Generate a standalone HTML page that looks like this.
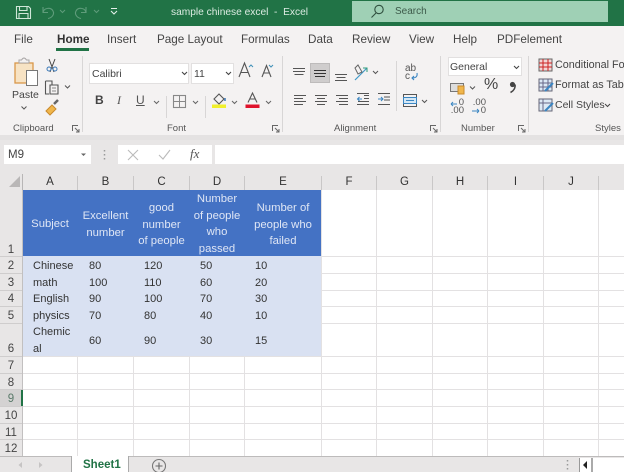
<!DOCTYPE html>
<html><head><meta charset="utf-8">
<style>
html,body{margin:0;padding:0}
body{width:624px;height:472px;overflow:hidden;position:relative;background:#fff;font-family:"Liberation Sans",sans-serif;color:#333}
div,svg{position:absolute}
.t{white-space:nowrap;line-height:14px}
.tab{top:33px;font-size:11.7px;color:#444}
.g{top:122px;font-size:9.500px;color:#555;line-height:13px;white-space:nowrap}
.c{font-size:11px;color:#333;white-space:nowrap;line-height:14px}
.w{color:#dfe6f5;font-size:11.300px;line-height:16.700px;text-align:center;white-space:nowrap}
.ch{top:175px;font-size:11.500px;color:#333;text-align:center;line-height:14px}
.rh{left:0;width:22px;text-align:center;font-size:11.500px;color:#444;line-height:14px;padding-left:0}
.vl{top:190px;height:266px;width:1px;background:#e3e1e2}
.hl{left:23px;width:601px;height:1px;background:#e3e1e2}
.hs{left:0;width:22px;height:1px;background:#cfcdcd}
.vs{top:176px;height:14px;width:1px;background:#c9c7c7}
.sep{width:1px;background:#d8d6d6}
.btn{background:#fff;border:1px solid #e2e0e0;box-sizing:border-box}
svg{overflow:visible}
</style></head><body>
<!-- title bar -->
<div style="left:0;top:0;width:624px;height:26px;background:#217346"></div>
<svg style="left:0;top:0" width="130" height="26" fill="none">
<path d="M16.500 6.500H28.500L30.500 8.500V18.500H16.500Z M19.500 6.500V10.500H27V6.500 M19 18.500V13.500H28V18.500" stroke="#cfe6d8" stroke-width="1.100"/>
<path d="M43 12.500C44 7.500 51 7 53 11C55 15 51 18 48 18.500M43 7V12.500H48" stroke="#5f9c7b" stroke-width="1.100"/>
<path d="M60 10l2.500 2.500L65 10" stroke="#5f9c7b"/>
<path d="M86 12.500C85 7.500 78 7 76 11C74 15 78 18 81 18.500M86 7V12.500H81" stroke="#5f9c7b" stroke-width="1.100"/>
<path d="M94 10l2.500 2.500L99 10" stroke="#5f9c7b"/>
<path d="M111 8.500H117M111 11l3 3 3-3" stroke="#e4f0e9" stroke-width="1.100"/>
</svg>
<div class="t" style="left:171px;top:6px;font-size:10.200px;color:#dcebe2">sample chinese excel&nbsp; -&nbsp; Excel</div>
<div style="left:352px;top:1px;width:256px;height:21px;background:#9fd0b5"></div>
<svg style="left:368px;top:3px" width="18" height="16" fill="none" stroke="#2f4f3e" stroke-width="1.100"><circle cx="11" cy="6.500" r="4.200"/><path d="M8 10L3.500 14.500"/></svg>
<div class="t" style="left:395px;top:5px;font-size:10px;color:#3d5a4a">Search</div>
<!-- ribbon -->
<div style="left:0;top:26px;width:624px;height:109px;background:#f4f2f2"></div>
<div style="left:0;top:135px;width:624px;height:5px;background:#e4e2e2"></div>
<div class="t tab" style="left:14px">File</div>
<div class="t tab" style="left:57px;font-weight:bold;color:#333;font-size:11.700px">Home</div>
<div style="left:56px;top:48px;width:33px;height:3px;background:#217346"></div>
<div class="t tab" style="left:107px">Insert</div>
<div class="t tab" style="left:157px">Page Layout</div>
<div class="t tab" style="left:241px">Formulas</div>
<div class="t tab" style="left:308px">Data</div>
<div class="t tab" style="left:352px">Review</div>
<div class="t tab" style="left:409px">View</div>
<div class="t tab" style="left:453px">Help</div>
<div class="t tab" style="left:497px">PDFelement</div>
<!-- separators -->
<div class="sep" style="left:82px;top:56px;height:76px"></div>
<div class="sep" style="left:282px;top:56px;height:76px"></div>
<div class="sep" style="left:440px;top:56px;height:76px"></div>
<div class="sep" style="left:528px;top:56px;height:76px"></div>
<div class="sep" style="left:396px;top:61px;height:50px"></div>
<div class="sep" style="left:166px;top:96px;height:22px"></div>
<div class="sep" style="left:205px;top:96px;height:22px"></div>
<!-- clipboard -->
<svg style="left:0;top:50px" width="82" height="72" fill="none">
<rect x="15" y="13" width="18" height="20" fill="#f7e3c4" stroke="#d9974a" stroke-width="1.300"/>
<path d="M19 13V10H21.500Q24 6 26.500 10H29V13Z" fill="#f4f2f2" stroke="#a9a6a6"/>
<rect x="26.500" y="20.500" width="11" height="15" fill="#fff" stroke="#777"/>
<path d="M49 9L54 22M55 9L50 22" stroke="#444"/>
<circle cx="49" cy="19" r="2" stroke="#3b79b8"/><circle cx="55" cy="19" r="2" stroke="#3b79b8"/>
<path d="M45.500 31H52V35M45.500 31V44H49M50 35H58V44H50Z" stroke="#555" stroke-width="1.100"/>
<path d="M52 38H56M52 41H56" stroke="#888"/>
<path d="M65 35.500l2.500 2.500 2.500-2.500" stroke="#555"/>
<path d="M21.500 56.500l2.500 2.500 2.500-2.500" stroke="#555"/>
<path d="M46 61L52 55L56 59L50 65Z" fill="#f0b64b" stroke="#c98a2c"/>
<path d="M54 54L58 50" stroke="#666" stroke-width="2.500"/>
</svg>
<div class="t" style="left:12px;top:88px;font-size:10.500px;color:#444">Paste</div>
<div class="g" style="left:13px">Clipboard</div>
<svg style="left:72px;top:125px" width="8" height="8" fill="none" stroke="#666"><path d="M.5 6V.5H6M3 3L7 7M7 4V7H4"/></svg>
<!-- font -->
<div class="btn" style="left:89px;top:63px;width:100px;height:21px"></div>
<div class="t" style="left:92px;top:67px;font-size:10.500px;color:#444">Calibri</div>
<div class="btn" style="left:191px;top:63px;width:43px;height:21px"></div>
<div class="t" style="left:194px;top:67px;font-size:10.500px;color:#444">11</div>
<svg style="left:0;top:50px" width="282" height="85" fill="none">
<path d="M182 22l2.500 2.500L187 22M226 22l2.500 2.500L231 22" stroke="#444" stroke-width="1.100"/>
<path d="M239 27L244.500 13L250 27M241 22.500H248" stroke="#555" stroke-width="1.100"/>
<path d="M249 17l2-2 2 2" stroke="#3f8fb8"/>
<path d="M262 27L266.500 15.500L271 27M263.500 23H269.500" stroke="#555" stroke-width="1.100"/>
<path d="M269 15l2 2 2-2" stroke="#3f8fb8"/>
<path d="M154 51l2.500 2.500L159 51M193 51l2.500 2.500L198 51M232 51l2.500 2.500L237 51M266 51l2.500 2.500L271 51" stroke="#666"/>
<rect x="173.500" y="45.500" width="12" height="12" stroke="#888" stroke-width="1.100"/>
<path d="M179.500 45.500V57.500M173.500 51.500H185.500" stroke="#888"/>
<path d="M214 49L219 44L224 49L219 54Z" stroke="#555" stroke-width="1.100"/>
<path d="M225 48V51" stroke="#3b79b8" stroke-width="1.500"/>
<rect x="212" y="54.500" width="14" height="3.500" fill="#f1f02c"/>
<path d="M248 52.500L252.500 43L257 52.500M250 49H255" stroke="#555" stroke-width="1.100"/>
<rect x="245.500" y="54.500" width="14" height="3.500" fill="#e0132c"/>
</svg>
<div class="t" style="left:95px;top:93px;font-size:12px;font-weight:bold;color:#444">B</div>
<div class="t" style="left:117px;top:93px;font-size:12px;font-style:italic;font-family:'Liberation Serif',serif;color:#555">I</div>
<div class="t" style="left:136px;top:93px;font-size:12px;color:#555;text-decoration:underline">U</div>
<div class="g" style="left:167px">Font</div>
<svg style="left:272px;top:125px" width="8" height="8" fill="none" stroke="#666"><path d="M.5 6V.5H6M3 3L7 7M7 4V7H4"/></svg>
<!-- alignment -->
<div style="left:310px;top:63px;width:20px;height:20px;background:#cfcdcd;border:1px solid #bdbbbb;box-sizing:border-box"></div>
<svg style="left:0;top:50px" width="440" height="85" fill="none" stroke="#555">
<path d="M293 18.500H305M293 21.500H305M294.500 24.500H303.500" stroke-width="1"/>
<path d="M314 20.500H326M314 23.500H326M315 26.500H325" stroke="#333" stroke-width="1.100"/>
<path d="M335 24.500H347M336.500 27.500H345.500M335 30.500H347" stroke-width="1"/>
<path d="M294 45.500H306M294 48.500H303M294 51.500H306M294 54.500H303"/>
<path d="M315 45.500H327M317 48.500H325M315 51.500H327M317 54.500H325"/>
<path d="M336 45.500H348M339 48.500H348M336 51.500H348M339 54.500H348"/>
<path d="M364 45.500H369M364 48.500H369M358 51.500H369M357 43.500H369M357 54.500H369" />
<path d="M362 49H357.500M359.500 47L357.500 49L359.500 51" stroke="#3b86c2"/>
<path d="M378 43.500H390M384 47H390M384 50H390M378 54.500H390"/>
<path d="M378 49H383M381 47L383 49L381 51" stroke="#3b86c2"/>
<path d="M355 30L367 18" stroke="#3f9ac9" stroke-width="1.200"/>
<path d="M363 18H367V22" stroke="#2f9c7a"/>
<path d="M355 18L358 24L362 22L358 15Z" stroke="#666"/>
<path d="M373 21l2.500 2.500L378 21M422 50l2.500 2.500L427 50" stroke="#555"/>
<path d="M417 23Q418 28 412 28M414 26L412 28L414 30" stroke="#3b86c2" stroke-width="1.100"/>
<rect x="403.500" y="44.500" width="13" height="12" stroke="#555"/>
<rect x="403.500" y="47.500" width="13" height="6" fill="#d4e7f5" stroke="#3b86c2"/>
<path d="M406 50.500H414" stroke="#3b86c2"/>
</svg>
<div class="t" style="left:405px;top:65px;font-size:10px;line-height:7.500px;color:#555;white-space:normal;width:14px">ab<br>c</div>
<div class="g" style="left:334px">Alignment</div>
<svg style="left:430px;top:125px" width="8" height="8" fill="none" stroke="#666"><path d="M.5 6V.5H6M3 3L7 7M7 4V7H4"/></svg>
<!-- number -->
<div class="btn" style="left:448px;top:57px;width:74px;height:19px"></div>
<div class="t" style="left:450px;top:60px;font-size:10.500px;color:#444">General</div>
<svg style="left:0;top:50px" width="528" height="85" fill="none" stroke="#555">
<path d="M514 16l2.500 2.500L519 16" stroke="#444" stroke-width="1.100"/>
<rect x="450.500" y="33.500" width="13" height="8" fill="#ddd" stroke="#777"/>
<rect x="458" y="36" width="6" height="8" fill="#f0b64b" stroke="#c98a2c"/>
<path d="M470 36.500l2.500 2.500L475 36.500" stroke="#555"/>
<path d="M451 54H457M451 54L453 52M451 54L453 56" stroke="#3b86c2"/>
<path d="M472 61H479M479 61L477 59M479 61L477 63" stroke="#3b86c2"/>
<circle cx="512.500" cy="34.500" r="2.600" fill="#444" stroke="none"/>
<path d="M515 34.500C515.500 38 513.500 41 510.500 42.500" stroke="#444" stroke-width="1.600"/>
</svg>
<div class="t" style="left:484px;top:78px;font-size:16px;color:#444">%</div>
<div class="t" style="left:449px;top:99px;font-size:9.500px;line-height:8px;color:#555;white-space:normal;width:15px;text-align:right">0<br>.00</div>
<div class="t" style="left:471px;top:99px;font-size:9.500px;line-height:8px;color:#555;white-space:normal;width:15px;text-align:right">.00<br>0</div>
<div class="g" style="left:461px">Number</div>
<svg style="left:518px;top:125px" width="8" height="8" fill="none" stroke="#666"><path d="M.5 6V.5H6M3 3L7 7M7 4V7H4"/></svg>
<!-- styles -->
<svg style="left:0;top:50px" width="560" height="70" fill="none">
<rect x="539" y="9" width="13" height="12" fill="#f3d6d6" stroke="#666"/>
<path d="M539 13H552M539 17H552M543 9V21M548 9V21" stroke="#c22"/>
<rect x="539" y="29" width="13" height="12" fill="#dce9f5" stroke="#667"/>
<path d="M539 33H552M539 37H552M543 29V41M548 29V41" stroke="#668"/>
<path d="M545 41L553 33" stroke="#3b86c2" stroke-width="2"/>
<rect x="539" y="49" width="13" height="12" fill="#dce9f5" stroke="#667"/>
<path d="M539 53H552M543 49V61" stroke="#668"/>
<path d="M545 61L553 53" stroke="#3b86c2" stroke-width="2"/>
<path d="M605 54l2.500 2.500L610 54" stroke="#444"/>
</svg>
<div class="t" style="left:555px;top:58px;font-size:10.800px;color:#444">Conditional For</div>
<div class="t" style="left:555px;top:78px;font-size:10.800px;color:#444">Format as Table</div>
<div class="t" style="left:555px;top:98px;font-size:10.500px;color:#444">Cell Styles</div>
<div class="g" style="left:595px">Styles</div>
<!-- formula bar -->
<div style="left:0;top:140px;width:624px;height:36px;background:#e8e6e6"></div>
<div style="left:4px;top:145px;width:87px;height:19px;background:#fff"></div>
<div class="t" style="left:8px;top:148px;font-size:11.500px;color:#444">M9</div>
<svg style="left:0;top:140px" width="240" height="30" fill="none">
<path d="M81 13.500h5l-2.500 2.500Z" fill="#666"/>
<path d="M104.500 10v1.500M104.500 14v1.500M104.500 18v1.500" stroke="#999" stroke-width="1.500"/>
</svg>
<div style="left:118px;top:145px;width:94px;height:19px;background:#fff"></div>
<svg style="left:118px;top:145px" width="94" height="19" fill="none">
<path d="M10 5L20 15M20 5L10 15" stroke="#bbb" stroke-width="1.100"/>
<path d="M41 10L45 14L52 5" stroke="#bbb" stroke-width="1.100"/>
</svg>
<div class="t" style="left:190px;top:147px;font-size:13px;font-style:italic;font-family:'Liberation Serif',serif;color:#555">fx</div>
<div style="left:215px;top:145px;width:409px;height:19px;background:#fff"></div>
<!-- col headers -->
<div style="left:0;top:170px;width:624px;height:20px;background:#e8e6e6"></div>
<svg style="left:0;top:170px" width="24" height="20"><path d="M9 17L20 6V17Z" fill="#b9b7b7"/></svg>
<div style="left:22px;top:174px;width:1px;height:16px;background:#b8b6b6"></div>
<div class="vs" style="left:77px"></div><div class="vs" style="left:133px"></div><div class="vs" style="left:189px"></div><div class="vs" style="left:244px"></div><div class="vs" style="left:321px"></div><div class="vs" style="left:376px"></div><div class="vs" style="left:432px"></div><div class="vs" style="left:487px"></div><div class="vs" style="left:543px"></div><div class="vs" style="left:598px"></div>
<div class="ch" style="left:23px;width:54px">A</div><div class="ch" style="left:78px;width:55px">B</div><div class="ch" style="left:134px;width:55px">C</div><div class="ch" style="left:190px;width:54px">D</div><div class="ch" style="left:245px;width:76px">E</div><div class="ch" style="left:322px;width:54px">F</div><div class="ch" style="left:377px;width:55px">G</div><div class="ch" style="left:433px;width:54px">H</div><div class="ch" style="left:488px;width:55px">I</div><div class="ch" style="left:544px;width:54px">J</div>
<!-- row headers -->
<div style="left:0;top:190px;width:22px;height:266px;background:#e8e6e6"></div>
<div style="left:22px;top:190px;width:1px;height:266px;background:#c2c0c0"></div>
<div style="left:0;top:390px;width:22px;height:16px;background:#d4d2d2"></div>
<div style="left:21px;top:390px;width:2px;height:16px;background:#217346"></div>
<div class="hs" style="top:256px"></div><div class="hs" style="top:273px"></div><div class="hs" style="top:290px"></div><div class="hs" style="top:306px"></div><div class="hs" style="top:323px"></div><div class="hs" style="top:356px"></div><div class="hs" style="top:373px"></div><div class="hs" style="top:389px"></div><div class="hs" style="top:406px"></div><div class="hs" style="top:423px"></div><div class="hs" style="top:439px"></div>
<div class="rh" style="top:243px">1</div><div class="rh" style="top:259px">2</div><div class="rh" style="top:276px">3</div><div class="rh" style="top:292px">4</div><div class="rh" style="top:309px">5</div><div class="rh" style="top:342px">6</div><div class="rh" style="top:359px">7</div><div class="rh" style="top:376px">8</div><div class="rh" style="top:392px;color:#5a7a6a">9</div><div class="rh" style="top:409px">10</div><div class="rh" style="top:426px">11</div><div class="rh" style="top:442px">12</div>
<!-- grid -->
<div class="vl" style="left:77px"></div><div class="vl" style="left:133px"></div><div class="vl" style="left:189px"></div><div class="vl" style="left:244px"></div><div class="vl" style="left:321px"></div><div class="vl" style="left:376px"></div><div class="vl" style="left:432px"></div><div class="vl" style="left:487px"></div><div class="vl" style="left:543px"></div><div class="vl" style="left:598px"></div>
<div class="hl" style="top:256px"></div><div class="hl" style="top:273px"></div><div class="hl" style="top:290px"></div><div class="hl" style="top:306px"></div><div class="hl" style="top:323px"></div><div class="hl" style="top:356px"></div><div class="hl" style="top:373px"></div><div class="hl" style="top:389px"></div><div class="hl" style="top:406px"></div><div class="hl" style="top:423px"></div><div class="hl" style="top:439px"></div>
<!-- table -->
<div style="left:23px;top:190px;width:298px;height:66px;background:#4472c4"></div>
<div style="left:23px;top:256px;width:298px;height:100px;background:#d9e1f2"></div>
<div class="w" style="left:23px;width:54px;top:216px">Subject</div>
<div class="w" style="left:78px;width:55px;top:208px">Excellent<br>number</div>
<div class="w" style="left:134px;width:55px;top:200px">good<br>number<br>of people</div>
<div class="w" style="left:190px;width:54px;top:191px">Number<br>of people<br>who<br>passed</div>
<div class="w" style="left:245px;width:76px;top:200px">Number of<br>people who<br>failed</div>
<div class="c" style="left:33px;top:259px">Chinese</div><div class="c" style="left:89px;top:259px">80</div><div class="c" style="left:144px;top:259px">120</div><div class="c" style="left:200px;top:259px">50</div><div class="c" style="left:255px;top:259px">10</div>
<div class="c" style="left:33px;top:276px">math</div><div class="c" style="left:89px;top:276px">100</div><div class="c" style="left:144px;top:276px">110</div><div class="c" style="left:200px;top:276px">60</div><div class="c" style="left:255px;top:276px">20</div>
<div class="c" style="left:33px;top:292px">English</div><div class="c" style="left:89px;top:292px">90</div><div class="c" style="left:144px;top:292px">100</div><div class="c" style="left:200px;top:292px">70</div><div class="c" style="left:255px;top:292px">30</div>
<div class="c" style="left:33px;top:309px">physics</div><div class="c" style="left:89px;top:309px">70</div><div class="c" style="left:144px;top:309px">80</div><div class="c" style="left:200px;top:309px">40</div><div class="c" style="left:255px;top:309px">10</div>
<div class="c" style="left:33px;top:325px">Chemic</div><div class="c" style="left:33px;top:342px">al</div>
<div class="c" style="left:89px;top:334px">60</div><div class="c" style="left:144px;top:334px">90</div><div class="c" style="left:200px;top:334px">30</div><div class="c" style="left:255px;top:334px">15</div>
<!-- sheet tabs -->
<div style="left:0;top:456px;width:624px;height:16px;background:#e8e6e6;border-top:1px solid #bdbbbb;box-sizing:border-box"></div>
<div style="left:71px;top:456px;width:58px;height:16px;background:#fff;border-left:1px solid #aaa;border-right:1px solid #aaa;box-sizing:border-box"></div>
<div class="t" style="left:83px;top:458px;font-size:11.500px;font-weight:bold;color:#217346">Sheet1</div>
<svg style="left:0;top:456px" width="624" height="16" fill="none">
<path d="M22 6L18.500 9L22 12Z" fill="#c6c4c4"/>
<path d="M39 6L42.500 9L39 12Z" fill="#c6c4c4"/>
<circle cx="159" cy="10" r="6.500" stroke="#777" stroke-width="1.100"/>
<path d="M155.500 10H162.500M159 6.500V13.500" stroke="#666" stroke-width="1.100"/>
<path d="M567.500 4v1.500M567.500 8v1.500M567.500 12v1.500" stroke="#999" stroke-width="1.500"/>
</svg>
<div style="left:579px;top:458px;width:45px;height:14px;background:#fff;border-left:1px solid #999;box-sizing:border-box"></div>
<div style="left:591px;top:458px;width:2px;height:14px;background:#aaa"></div>
<svg style="left:579px;top:458px" width="14" height="14"><path d="M8 3L4 7L8 11Z" fill="#222"/></svg>
</body></html>
